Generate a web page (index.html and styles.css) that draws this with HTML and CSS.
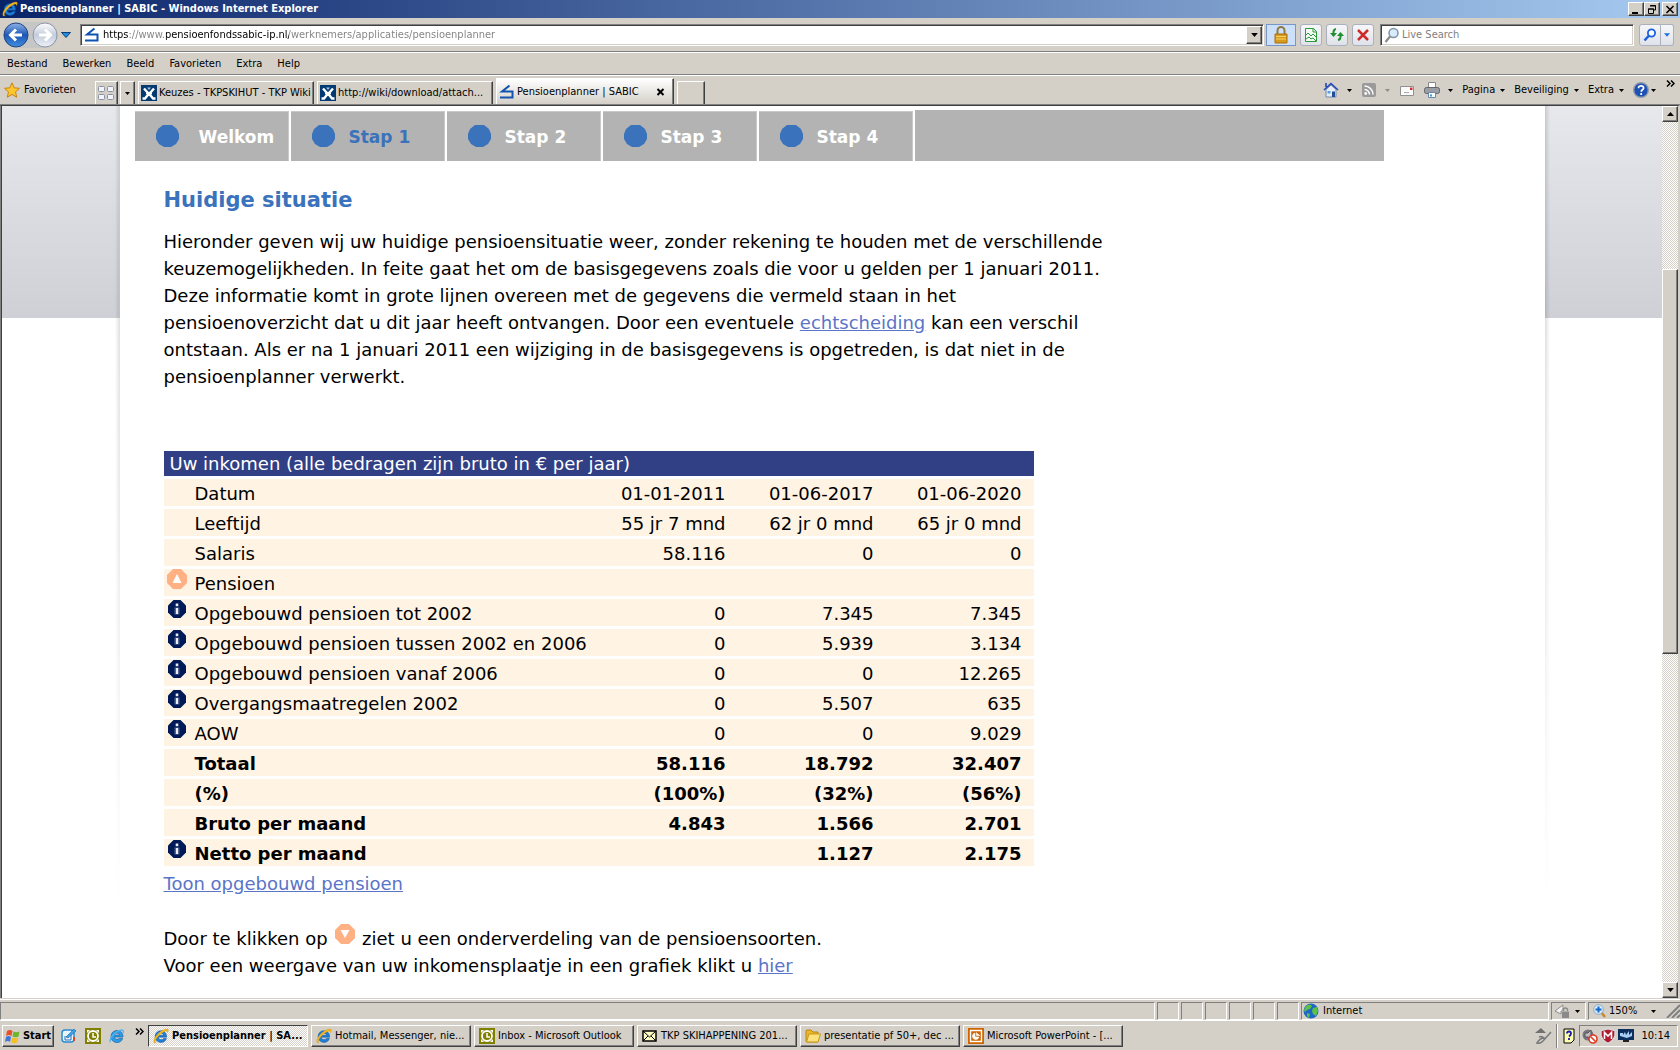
FILE: index.html
```html
<!DOCTYPE html>
<html lang="nl">
<head>
<meta charset="utf-8">
<title>Pensioenplanner | SABIC</title>
<link rel="stylesheet" href="styles.css">
</head>
<body>
<svg class="defs" aria-hidden="true">
  <defs>
    <linearGradient id="gBlue" x1="0" y1="0" x2="0" y2="1"><stop offset="0" stop-color="#8db4e8"/><stop offset=".5" stop-color="#1f56b5"/><stop offset="1" stop-color="#3f8fe0"/></linearGradient>
    <linearGradient id="gPale" x1="0" y1="0" x2="0" y2="1"><stop offset="0" stop-color="#fff"/><stop offset=".5" stop-color="#c3cbdb"/><stop offset="1" stop-color="#eef2f8"/></linearGradient>
    <symbol id="ie" viewBox="0 0 16 16">
      <path d="M13.6 9.2H5.2c.1 1.500 1.200 2.500 2.800 2.500 1.100 0 1.900-.4 2.400-1.200h3c-.8 2.500-2.800 3.900-5.500 3.900C4.500 14.400 2.100 12 2.100 8.600S4.500 2.800 7.900 2.800s5.900 2.400 5.700 6.400zM5.300 7.300h5.200C10.300 6 9.400 5.200 7.900 5.200S5.500 6 5.300 7.300z" fill="#1e7fd6" stroke="#0c4d9c" stroke-width=".5"/>
      <path d="M1.300 14.800C-.6 12.600 3 6.500 8 3.300 11.500 1 15 .2 15.300 1.900c.1.800-.2 1.800-.8 2.800.1-1.400-.6-2-2.100-1.500C8.500 4.500 3.400 9.500 2.400 12.600c-.3 1.100 0 1.700.9 1.700-.8.6-1.500.9-2 .5z" fill="#f5b81f" stroke="#c98a08" stroke-width=".3"/>
    </symbol>
    <symbol id="sabic" viewBox="0 0 16 16"><path d="M10.500 1.500 3 7.500h10.500v6H1" fill="none" stroke="#1253b0" stroke-width="2"/></symbol>
    <symbol id="wiki" viewBox="0 0 16 16"><path d="M0 0h16v16H0z" fill="#033a72"/><path d="M3 3.500 7 8M13 3.500 9 8M1.500 13.500h2.500L8 8.500l4 5h2.500" fill="none" stroke="#fff" stroke-width="2.400"/><path d="M6 2.500h4L8 5z" fill="#9fc3e6"/><path d="M5 8.500h6" stroke="#fff" stroke-width="1.500"/></symbol>
    <symbol id="caret" viewBox="0 0 5 3"><path d="M0 0h5L2.500 3z"/></symbol>
    <symbol id="clock" viewBox="0 0 16 16"><path d="M0 0h16v16H0z" fill="#808000"/><path d="M2 2h3L2 5zM14 2v3l-3-3zM2 14v-3l3 3zM14 14h-3l3-3z" fill="#fff"/><circle cx="8" cy="8" r="5" fill="none" stroke="#fff" stroke-width="1.800"/><path d="M8 5v4h3" fill="none" stroke="#fff" stroke-width="1.500"/></symbol>
    <symbol id="info" viewBox="0 0 18 18"><path d="M5.500 0h7L18 5.500v7L12.500 18h-7L0 12.500v-7z" fill="#001a57"/><path d="M6.500 7.500h5v7h-5z" fill="#53628c"/><path d="M8 8h2v6H8zM7.700 3.500h2.600v2.700H7.700z" fill="#e8edf5"/></symbol>
    <symbol id="up" viewBox="0 0 20 20"><path d="M6 0h8l6 6v8l-6 6H6l-6-6V6z" fill="#ffb184"/><path d="M10 5l4.500 9h-9z" fill="#fff"/></symbol>
    <symbol id="down" viewBox="0 0 20 20"><path d="M6 0h8l6 6v8l-6 6H6l-6-6V6z" fill="#ffb184"/><path d="M10 14l4.500-8h-9z" fill="#fff"/></symbol>
    <symbol id="dot" viewBox="0 0 23 22"><path d="M7 0h9l5 4 2 5v5l-3 5-5 3H8l-5-3-3-5V9l2-5z" fill="#3a72bb"/></symbol>
    <symbol id="more" viewBox="0 0 9 7"><path d="M1 .5l3 3-3 3M5 .5l3 3-3 3" fill="none" stroke="#000" stroke-width="1.500"/></symbol>
  </defs>
</svg>

<header class="titlebar">
  <svg class="i16"><use href="#ie"/></svg>
  <h1>Pensioenplanner | SABIC - Windows Internet Explorer</h1>
  <div class="winbtns">
    <button class="raised winbtn" aria-label="Minimaliseren"><svg width="10" height="9"><path d="M1 7h6v2H1z"/></svg></button>
    <button class="raised winbtn" aria-label="Verkleinen"><svg width="10" height="9"><path d="M3.500 1v-.5h5v4.500H7M3 1h6M1.500 4h5v4.500h-5zM1 4h6" fill="none" stroke="#000"/></svg></button>
    <button class="raised winbtn winclose" aria-label="Sluiten"><svg width="10" height="9"><path d="M1.500 1l7 7M8.500 1l-7 7" stroke="#000" stroke-width="1.600"/></svg></button>
  </div>
</header>

<nav class="address" aria-label="Navigatie">
  <div class="travel">
    <button class="plain" aria-label="Vorige"><svg width="26" height="26" viewBox="0 0 26 26"><circle cx="13" cy="13" r="12" fill="url(#gBlue)" stroke="#24457e"/><path d="M19 13H8M13 7.500 7.500 13l5.500 5.500" fill="none" stroke="#fff" stroke-width="3"/></svg></button>
    <button class="plain" aria-label="Volgende"><svg width="26" height="26" viewBox="0 0 26 26"><circle cx="13" cy="13" r="12" fill="url(#gPale)" stroke="#8f98a8"/><path d="M7 13h11M13 7.500l5.500 5.500-5.500 5.500" fill="none" stroke="#fff" stroke-width="3"/></svg></button>
  </div>
  <button class="plain recent" aria-label="Recente pagina's"><svg width="10" height="6"><path d="M.5.500h9L5 5.500z" fill="#1d8fd6" stroke="#0b3d80"/></svg></button>
  <div class="field urlfield">
    <svg class="i16"><use href="#sabic"/></svg>
    <input class="url" type="text" aria-label="Adres" value="https://www.pensioenfondssabic-ip.nl/werknemers/applicaties/pensioenplanner">
    <button class="raised drop" aria-label="Adreslijst"><svg width="7" height="4"><use href="#caret"/></svg></button>
  </div>
  <button class="lockbtn" aria-label="Beveiligingsrapport"><svg width="16" height="18" viewBox="0 0 16 18"><path d="M4.500 8V4.500a3.500 3.500 0 0 1 7 0V8" fill="none" stroke="#8d7a45" stroke-width="2"/><path d="M2 8h12v9H2z" fill="#d99a1c" stroke="#a96f0a"/><path d="M3 10.500h10M3 13h10" stroke="#f6d36a"/></svg></button>
  <button class="tool" aria-label="Compatibiliteit"><svg width="14" height="16" viewBox="0 0 14 16"><path d="M1.500 1.500h8l3 3v10h-11zM9 1.500v3.500h3.500" fill="#f4fbf4" stroke="#2d9a3a"/><path d="M2 8l2-2 3 3 2-2 3 3M2 12l3-2 2 2 2-1 3 3" fill="none" stroke="#2d9a3a"/></svg></button>
  <button class="tool" aria-label="Vernieuwen"><svg width="14" height="14" viewBox="0 0 14 14"><path d="M6 1Q3 1.500 3.500 6M8 12q3-.5 2.500-5" fill="none" stroke="#1e8f2c" stroke-width="2"/><path d="M0 5h7L3.500 9zM7 8h7l-3.500-4z" fill="#1e8f2c"/></svg></button>
  <button class="tool" aria-label="Stoppen"><svg width="14" height="14" viewBox="0 0 14 14"><path d="M2 2l10 10M12 2 2 12" stroke="#cc2b2b" stroke-width="2.500"/></svg></button>
  <div class="field searchfield">
    <svg class="i16" viewBox="0 0 16 16"><circle cx="9.500" cy="6" r="4.500" fill="#d9ecfb" stroke="#7f93a8" stroke-width="1.500"/><path d="M6 9.500 1.500 15" stroke="#8a8a8a" stroke-width="2.200"/></svg>
    <input type="text" aria-label="Zoeken" placeholder="Live Search">
  </div>
  <div class="searchbtns">
    <button class="tool" aria-label="Zoeken"><svg width="14" height="14" viewBox="0 0 14 14"><circle cx="8.500" cy="5" r="3.600" fill="#fff" stroke="#1b5fe0" stroke-width="1.800"/><path d="M6 7.500 1.500 12.500" stroke="#1b5fe0" stroke-width="2.500"/></svg></button>
    <button class="tool slim" aria-label="Zoekopties"><svg width="6" height="4" fill="#1b6fe0"><use href="#caret"/></svg></button>
  </div>
</nav>

<nav class="menu" aria-label="Menu">
  <button class="plain">Bestand</button><button class="plain">Bewerken</button><button class="plain">Beeld</button><button class="plain">Favorieten</button><button class="plain">Extra</button><button class="plain">Help</button>
</nav>

<div class="tabsrow">
  <button class="plain fav"><svg class="i16" viewBox="0 0 16 16"><path d="M8 .8l2.200 5 5.300.5-4 3.600 1.200 5.300L8 12.400l-4.700 2.800 1.200-5.300-4-3.600 5.300-.5z" fill="#fcc62f" stroke="#c98311"/></svg>Favorieten</button>
  <div class="tabs">
    <button class="tab quick" aria-label="Snelle tabbladen"><svg width="16" height="14" viewBox="0 0 16 14"><g fill="#f2f4f9" stroke="#8790a6"><rect x=".5" y=".5" width="6" height="5" rx="1"/><rect x="9.500" y=".5" width="6" height="5" rx="1"/><rect x=".5" y="8.500" width="6" height="5" rx="1"/><rect x="9.500" y="8.500" width="6" height="5" rx="1"/></g></svg></button>
    <button class="tab tablist" aria-label="Tabbladenlijst"><svg width="5" height="3"><use href="#caret"/></svg></button>
    <button class="tab"><svg class="i16"><use href="#wiki"/></svg><span>Keuzes - TKPSKIHUT - TKP Wiki</span></button>
    <button class="tab"><svg class="i16"><use href="#wiki"/></svg><span>http://wiki/download/attach...</span></button>
    <button class="tab active"><svg class="i16"><use href="#sabic"/></svg><span>Pensioenplanner | SABIC</span><svg class="close" width="9" height="8"><path d="M1.500 1l6 6M7.500 1l-6 6" stroke="#000" stroke-width="2"/></svg></button>
    <button class="tab new" aria-label="Nieuw tabblad"></button>
  </div>
  <div class="commands">
    <button class="plain cmd" aria-label="Startpagina"><svg class="i16" viewBox="0 0 16 16"><path d="M3 7.500 8 3l5 4.500V15H3z" fill="#e6edf6" stroke="#7489a8"/><path d="M1 8l7-6.500L15 8M3 1v4" fill="none" stroke="#2347b8" stroke-width="1.600"/><path d="M9 9.500h3V15H9z" fill="#1d4f9c"/><path d="M4.500 9h3v2.500h-3z" fill="#59a0d8"/></svg><svg class="car"><use href="#caret"/></svg></button>
    <button class="plain cmd" aria-label="Feeds"><svg class="i16" viewBox="0 0 16 16"><rect x="1" y="1" width="14" height="14" rx="2" fill="#9a9a9a"/><circle cx="4.700" cy="11.500" r="1.400" fill="#fff"/><path d="M3.500 7.500a5 5 0 0 1 5 5M3.500 4a8.500 8.500 0 0 1 8.500 8.500" fill="none" stroke="#fff" stroke-width="1.500"/></svg><svg class="car dim"><use href="#caret"/></svg></button>
    <button class="plain cmd" aria-label="E-mail"><svg class="i16" viewBox="0 0 16 16"><path d="M1.500 4.500h13v9h-13z" fill="#fbfbfb" stroke="#909090"/><path d="M11 5.500h2.500V8H11z" fill="#d62b2b"/><path d="M5 10.500h5" stroke="#aaa"/></svg></button>
    <button class="plain cmd" aria-label="Afdrukken"><svg class="i16" viewBox="0 0 16 16"><path d="M4.500.5h7v6h-7z" fill="#fff" stroke="#888"/><rect x=".5" y="5.500" width="15" height="6" rx="2" fill="#9a9da3" stroke="#62656b"/><path d="M4.500 10.500h7v5h-7z" fill="#fff" stroke="#6a86b0"/><path d="M6 12.500h2v2H6z" fill="#2a9fd0"/></svg><svg class="car"><use href="#caret"/></svg></button>
    <button class="plain cmd txt">Pagina<svg class="car"><use href="#caret"/></svg></button>
    <button class="plain cmd txt">Beveiliging<svg class="car"><use href="#caret"/></svg></button>
    <button class="plain cmd txt">Extra<svg class="car"><use href="#caret"/></svg></button>
    <button class="plain cmd help" aria-label="Help"><svg class="i16" viewBox="0 0 16 16"><circle cx="8" cy="8" r="7.300" fill="#1d50b4" stroke="#8e98a8" stroke-width="1.400"/><path d="M5.500 6.200C5.500 4.500 6.500 3.800 8 3.800s2.600.8 2.600 2.200c0 1.700-2.400 1.800-2.400 3.700M8.200 11v2" fill="none" stroke="#fff" stroke-width="1.700"/></svg><svg class="car"><use href="#caret"/></svg></button>
    <button class="plain over" aria-label="Meer"><svg width="9" height="7"><use href="#more"/></svg></button>
  </div>
</div>

<div class="viewport">
  <div class="canvas">
    <div class="side left"></div>
    <main class="page">
      <ol class="steps">
        <li><a class="first" href="#welkom"><svg><use href="#dot"/></svg><span>Welkom</span></a></li>
        <li><a class="current" href="#stap1"><svg><use href="#dot"/></svg><span>Stap 1</span></a></li>
        <li><a href="#stap2"><svg><use href="#dot"/></svg><span>Stap 2</span></a></li>
        <li><a href="#stap3"><svg><use href="#dot"/></svg><span>Stap 3</span></a></li>
        <li><a href="#stap4"><svg><use href="#dot"/></svg><span>Stap 4</span></a></li>
      </ol>
      <article>
        <h2>Huidige situatie</h2>
        <p>Hieronder geven wij uw huidige pensioensituatie weer, zonder rekening te houden met de verschillende<br>keuzemogelijkheden. In feite gaat het om de basisgegevens zoals die voor u gelden per 1 januari 2011.<br>Deze informatie komt in grote lijnen overeen met de gegevens die vermeld staan in het<br>pensioenoverzicht dat u dit jaar heeft ontvangen. Door een eventuele <a href="#echtscheiding">echtscheiding</a> kan een verschil<br>ontstaan. Als er na 1 januari 2011 een wijziging in de basisgegevens is opgetreden, is dat niet in de<br>pensioenplanner verwerkt.</p>
        <table>
          <colgroup><col class="cicon"><col><col class="cnum"><col class="cnum"><col class="cnum"></colgroup>
          <thead><tr><th colspan="5">Uw inkomen (alle bedragen zijn bruto in € per jaar)</th></tr></thead>
          <tbody>
            <tr><td></td><td>Datum</td><td>01-01-2011</td><td>01-06-2017</td><td>01-06-2020</td></tr>
            <tr><td></td><td>Leeftijd</td><td>55 jr 7 mnd</td><td>62 jr 0 mnd</td><td>65 jr 0 mnd</td></tr>
            <tr><td></td><td>Salaris</td><td>58.116</td><td>0</td><td>0</td></tr>
            <tr><td><button class="plain" aria-label="Inklappen"><svg width="20" height="20"><use href="#up"/></svg></button></td><td>Pensioen</td><td></td><td></td><td></td></tr>
            <tr><td><button class="plain inf" aria-label="Info"><svg width="18" height="18"><use href="#info"/></svg></button></td><td>Opgebouwd pensioen tot 2002</td><td>0</td><td>7.345</td><td>7.345</td></tr>
            <tr><td><button class="plain inf" aria-label="Info"><svg width="18" height="18"><use href="#info"/></svg></button></td><td>Opgebouwd pensioen tussen 2002 en 2006</td><td>0</td><td>5.939</td><td>3.134</td></tr>
            <tr><td><button class="plain inf" aria-label="Info"><svg width="18" height="18"><use href="#info"/></svg></button></td><td>Opgebouwd pensioen vanaf 2006</td><td>0</td><td>0</td><td>12.265</td></tr>
            <tr><td><button class="plain inf" aria-label="Info"><svg width="18" height="18"><use href="#info"/></svg></button></td><td>Overgangsmaatregelen 2002</td><td>0</td><td>5.507</td><td>635</td></tr>
            <tr><td><button class="plain inf" aria-label="Info"><svg width="18" height="18"><use href="#info"/></svg></button></td><td>AOW</td><td>0</td><td>0</td><td>9.029</td></tr>
            <tr class="sum"><td></td><td>Totaal</td><td>58.116</td><td>18.792</td><td>32.407</td></tr>
            <tr class="sum"><td></td><td>(%)</td><td>(100%)</td><td>(32%)</td><td>(56%)</td></tr>
            <tr class="sum"><td></td><td>Bruto per maand</td><td>4.843</td><td>1.566</td><td>2.701</td></tr>
            <tr class="sum"><td><button class="plain inf" aria-label="Info"><svg width="18" height="18"><use href="#info"/></svg></button></td><td>Netto per maand</td><td></td><td>1.127</td><td>2.175</td></tr>
          </tbody>
        </table>
        <p class="show"><a href="#opgebouwd">Toon opgebouwd pensioen</a></p>
        <p class="note">Door te klikken op <svg width="20" height="20"><use href="#down"/></svg> ziet u een onderverdeling van de pensioensoorten.<br>Voor een weergave van uw inkomensplaatje in een grafiek klikt u <a href="#grafiek">hier</a></p>
      </article>
    </main>
    <div class="side right"></div>
  </div>
  <div class="scroll">
    <button class="raised sbtn" aria-label="Omhoog"><svg width="7" height="4"><path d="M0 4h7L3.500 0z"/></svg></button>
    <div class="track"><span class="before"></span><div class="raised thumb"></div><span class="after"></span></div>
    <button class="raised sbtn" aria-label="Omlaag"><svg width="7" height="4"><use href="#caret"/></svg></button>
  </div>
</div>

<footer class="status">
  <div class="pane grow"></div>
  <div class="pane small"></div><div class="pane small"></div><div class="pane small"></div><div class="pane small"></div><div class="pane small"></div><div class="pane small"></div>
  <div class="pane zone"><svg class="i16" viewBox="0 0 16 16"><circle cx="8" cy="8" r="7.500" fill="#1f66c9"/><path d="M3 3q4-3 6 0L7 6l-3 1-2 2L1 7zM10 5l4-1 1 4-2 5-3-2-1-3zM4 10l3 1-1 4-2-2z" fill="#5cc244"/></svg>Internet</div>
  <div class="pane prot"><svg width="16" height="16" viewBox="0 0 16 16"><path d="M9 2 1 8l6 3V8c2 0 2-3 2-6z" fill="#f3f3f3" stroke="#8e8e8e"/><path d="M8 8.500h7V15H8z" fill="#8a8a8a"/><path d="M9.500 8V6q2-2 4 0v2" fill="none" stroke="#8a8a8a" stroke-width="1.400"/></svg><svg class="car"><use href="#caret"/></svg></div>
  <div class="pane zoom"><svg width="14" height="14" viewBox="0 0 14 14"><path d="M8 8l4 5" stroke="#c48a2c" stroke-width="2.500"/><circle cx="5.500" cy="5.500" r="4.800" fill="#d8ecfb" stroke="#88a8c8"/><path d="M5.500 2.500v6M2.500 5.500h6" stroke="#1467c4" stroke-width="2"/></svg><span>150%</span><svg class="car"><use href="#caret"/></svg><svg class="grip" width="14" height="14"><path d="M1 14 14 1M6 14l8-8M11 14l3-3" stroke="#808080" stroke-width="2"/></svg></div>
</footer>

<div class="taskbar">
  <button class="raised start"><svg width="16" height="16" viewBox="0 0 16 16"><path d="M2 3q3-2 5.500 0L6.500 8Q4 6 1 8z" fill="#e8502a"/><path d="M8.500 3.500q3 1.500 6 0l-1 5q-3 1.500-6 0z" fill="#6fb52c"/><path d="M1 9q2.500-2 5 0l-1 5Q3 12 0 14z" fill="#3f78d8"/><path d="M7.200 9.500q3 1.500 6 0l-1 5q-3 1.500-6 0z" fill="#f6bf26"/></svg>Start</button>
  <div class="launch">
    <button class="plain" aria-label="Bureaublad"><svg class="i16" viewBox="0 0 16 16"><rect x="1" y="2" width="12" height="12" rx="3" fill="#e9f5fd" stroke="#2a8ad0" stroke-width="1.500"/><path d="M4 8v4h6V5" fill="none" stroke="#2a6fb8"/><path d="M5 9l8-8 2 2-8 7z" fill="#3da2e8" stroke="#1d5fa0" stroke-width=".6"/><path d="M13 9v4" stroke="#d8482a" stroke-width="2"/></svg></button>
    <button class="plain" aria-label="Outlook"><svg class="i16"><use href="#clock"/></svg></button>
    <button class="plain" aria-label="Internet Explorer"><svg class="i16" viewBox="0 0 16 16"><path d="M14 9H5.500c.2 1.500 1 2.300 2.500 2.300 1 0 1.700-.3 2.200-1h3.500C13 13 11 14.500 8 14.500c-3.600 0-6-2.500-6-6s2.500-6 6-6 6.300 2.500 6 6.500zM5.500 7h5C10.300 5.800 9.500 5.200 8 5.200S5.700 5.800 5.500 7z" fill="#2a9be8" stroke="#105a9e" stroke-width=".6"/><path d="M1.500 14C-.5 12 5 4 11 2.300c3-.8 4 .5 3 2.500" fill="none" stroke="#4fb2ee" stroke-width="1.400"/></svg></button>
    <button class="plain lmore" aria-label="Meer"><svg width="9" height="7"><use href="#more"/></svg></button>
  </div>
  <div class="tasks">
    <button class="task pressed"><svg class="i16"><use href="#ie"/></svg>Pensioenplanner | SA...</button>
    <button class="raised task"><svg class="i16"><use href="#ie"/></svg>Hotmail, Messenger, nie...</button>
    <button class="raised task"><svg class="i16"><use href="#clock"/></svg>Inbox - Microsoft Outlook</button>
    <button class="raised task"><svg class="i16" viewBox="0 0 16 16"><path d="M1 3h13v10H1z" fill="#ffffc8" stroke="#000" stroke-width="1.500"/><path d="M1 3l6.500 6L14 3M1 13l5-5M14 13 9 8" fill="none" stroke="#000"/></svg>TKP SKIHAPPENING 201...</button>
    <button class="raised task"><svg class="i16" viewBox="0 0 16 16"><path d="M1 3q0-1 1-1h4l2 2h5v10H2q-1 0-1-1z" fill="#e9b62c" stroke="#b9860f"/><path d="M1.500 14 4 6h11.500L13 14z" fill="#fbe27a" stroke="#c8971a"/></svg>presentatie pf 50+, dec ...</button>
    <button class="raised task"><svg class="i16" viewBox="0 0 16 16"><path d="M0 0h16v16H0z" fill="#cf6500"/><path d="M2.500 2.500h11v11h-11z" fill="none" stroke="#fff" stroke-width="1.400"/><path d="M7 5a3.300 3.300 0 1 0 4 4H7zM8.500 4.500V7.500H12" fill="#fff" stroke="#fff" stroke-width=".6"/></svg>Microsoft PowerPoint - [...</button>
  </div>
  <svg class="pen" width="17" height="16" viewBox="0 0 17 16"><path d="M0 5 6 0l5 5z" fill="#707070"/><path d="M16 4 8 13q-3 3-6 2 3-5 7-5-2-2-5-1" fill="none" stroke="#7a7a7a" stroke-width="1.600"/></svg>
  <div class="tray0"><svg width="12" height="16" viewBox="0 0 12 16"><path d="M1 1h10v11l-3 3H1z" fill="#ffffb0" stroke="#000"/><path d="M4 5.500q0-2 2-2t2 2q0 1.500-2 3M6 10v2" fill="none" stroke="#1a1ab0" stroke-width="1.800"/></svg></div>
  <div class="tray">
    <svg class="i16" viewBox="0 0 16 16"><circle cx="6" cy="7" r="5.500" fill="#77777d"/><path d="M3 5h3l3-3v9L6 9H3z" fill="#bfc0c6" stroke="#55565c"/><circle cx="11" cy="11" r="4" fill="#fff" stroke="#e03a22" stroke-width="1.600"/><path d="M8.500 8.500l5 5" stroke="#e03a22" stroke-width="1.600"/></svg>
    <svg class="i16" viewBox="0 0 16 16"><path d="M8 .8 15 2.500v5Q14 12.500 8 15.500 2 12.500 1 7.500v-5z" fill="#b01a2e" stroke="#d8d8dc" stroke-width="1.400"/><path d="M4.500 11V4.500L8 8l3.500-3.500V11" fill="none" stroke="#fff" stroke-width="1.600"/></svg>
    <svg class="i16" viewBox="0 0 16 16"><path d="M0 1h16v11H0z" fill="#0d2f5e"/><path d="M2 8V5h3v2l2-3 1 3 3-4v4l3-3v4l-5 2z" fill="#a8d0f5"/><path d="M5 12h6v2H5z" fill="#222"/></svg>
    <time>10:14</time>
  </div>
</div>
</body>
</html>
```
FILE: styles.css
```css
:root {
  --face: #d4d0c8;
  --dark: #404040;
  --mid: #808080;
  --ui: "DejaVu Sans Condensed", "DejaVu Sans", sans-serif;
}

* { box-sizing: border-box; }

body {
  margin: 0;
  height: 100vh;
  display: flex;
  flex-direction: column;
  overflow: hidden;
  background: var(--face);
  font-family: var(--ui);
  font-size: 11px;
  line-height: 14px;
  color: #000;
}

svg { display: block; flex: none; }
.defs { width: 0; height: 0; position: absolute; }
.i16 { width: 16px; height: 16px; }
.car { width: 5px; height: 3px; }
.dim { fill: #8c8c8c; }

button {
  font: inherit;
  color: inherit;
  padding: 0;
  margin: 0;
  border: 0;
  background: none;
  display: flex;
  align-items: center;
  white-space: nowrap;
}

.raised {
  background: var(--face);
  border: 1px solid;
  border-color: #fff var(--dark) var(--dark) #fff;
  box-shadow: inset -1px -1px var(--mid);
  justify-content: center;
}

/* Title bar */
.titlebar {
  flex: none;
  height: 18px;
  display: flex;
  align-items: center;
  gap: 2px;
  padding: 0 2px;
  color: #fff;
  background: linear-gradient(90deg, #0a246a, #a6caf0);
}
.titlebar h1 { margin: 0; font-size: 11px; font-weight: bold; flex: 1; }
.winbtns { display: flex; }
.winbtn { width: 16px; height: 14px; }
.winclose { margin-left: 2px; }

/* Address row */
.address {
  flex: none;
  height: 34px;
  display: flex;
  align-items: center;
  gap: 4px;
  padding: 1px 6px 0 3px;
  border-bottom: 1px solid var(--mid);
}
.travel {
  display: flex;
  gap: 3px;
  background: #c6c6c6;
  border-radius: 14px;
}
.recent { width: 16px; justify-content: center; margin: 0 2px 0 -4px; }
.field {
  height: 22px;
  display: flex;
  align-items: center;
  background: #fff;
  border: 1px solid;
  border-color: var(--mid) #fff #fff var(--mid);
  box-shadow: inset 1px 1px var(--dark), inset -1px -1px var(--face);
  padding: 2px 1px 2px 3px;
}
.field input {
  flex: 1;
  min-width: 0;
  border: 0;
  outline: 0;
  padding: 0;
  background: none;
  font: inherit;
}
.urlfield { flex: 1; gap: 3px; }
.field .url {
  color: transparent;
  background: linear-gradient(90deg, #000 26px, #808080 26px 63px, #000 63px 186px, #808080 186px);
  -webkit-background-clip: text;
  background-clip: text;
}
.drop { width: 16px; height: 18px; }
.searchfield { width: 254px; margin: 0 1px 0 2px; gap: 2px; }
.searchfield input::placeholder { color: #808080; opacity: 1; }
.lockbtn {
  width: 30px;
  height: 22px;
  justify-content: center;
  background: #cde0fa;
  border: 1px solid #7596c6;
  margin-left: -2px;
}
.tool {
  width: 22px;
  height: 22px;
  justify-content: center;
  background: linear-gradient(#f6f7f9, #dfe2ea);
  border: 1px solid #aab0bd;
  border-radius: 3px;
}
.searchbtns { display: flex; }
.searchbtns .tool:first-child { border-radius: 3px 0 0 3px; }
.slim { width: 13px; border-left: 0; border-radius: 0 3px 3px 0; }

/* Menu bar */
.menu {
  flex: none;
  height: 23px;
  display: flex;
  align-items: center;
  gap: 15px;
  padding: 1px 7px 0;
  border-top: 1px solid #fff;
  border-bottom: 1px solid var(--mid);
}

/* Tabs and commands */
.tabsrow {
  flex: none;
  height: 30px;
  display: flex;
  align-items: stretch;
  padding-left: 4px;
  border-top: 1px solid #fff;
  border-bottom: 1px solid var(--mid);
}
.fav { gap: 4px; width: 91px; }
.tabs { display: flex; align-items: flex-end; gap: 3px; flex: 1; min-width: 0; }
.tab {
  height: 23px;
  width: 176px;
  gap: 2px;
  padding-left: 2px;
  border-top: 1px solid #fff;
  border-left: 1px solid #fff;
  border-right: 1px solid var(--dark);
  box-shadow: inset -1px 0 var(--mid);
}
.quick { width: 23px; }
.tablist { width: 15px; padding-left: 4px; margin-left: -1px; }
.active { height: 26px; width: 178px; background: linear-gradient(#fff, var(--face)); }
.close { margin: 0 8px 0 auto; }
.new { width: 28px; }
.commands { display: flex; align-items: center; padding-right: 5px; }
.cmd { gap: 8px; margin-right: 9px; }
.cmd.txt { gap: 5px; margin-right: 9px; }
.cmd.help { gap: 2px; margin-right: 10px; }
.over { align-self: flex-start; margin-top: 4px; }

/* Document window */
.viewport {
  flex: 1;
  min-height: 0;
  display: flex;
  border: solid;
  border-width: 1px 2px 0 1px;
  border-color: var(--dark) var(--face) var(--face) var(--mid);
}
.canvas {
  flex: 1;
  min-width: 0;
  display: grid;
  grid-template-columns: 1fr minmax(0, 1425px) 1fr;
  overflow: hidden;
  background: #fff;
  border-left: 1px solid var(--dark);
}
.side {
  position: relative;
  background: linear-gradient(#e7e8ec, #cfd0d6) top / 100% 212px no-repeat;
}
.side::after {
  content: "";
  position: absolute;
  top: 0;
  width: 5px;
  height: 800px;
  background: linear-gradient(90deg, rgba(0, 0, 0, 0), rgba(0, 0, 0, .13));
  -webkit-mask-image: linear-gradient(#000 25%, transparent);
  mask-image: linear-gradient(#000 25%, transparent);
}
.left::after { right: 0; }
.right::after { left: 0; transform: scaleX(-1); }

.page { font-family: Verdana, "DejaVu Sans", sans-serif; font-size: 18px; line-height: 27px; }
.steps {
  display: flex;
  list-style: none;
  margin: 4px 161px 0 15px;
  padding: 0;
  height: 51px;
  background: #b3b3b3;
}
.steps li { background: #fff; padding: 1px 2px 0 0; }
.steps a {
  display: flex;
  align-items: center;
  gap: 14px;
  width: 154px;
  height: 50px;
  padding: 0 0 2px 21px;
  border: solid #c8c8c8;
  border-width: 1px 1px 0 0;
  background: #b3b3b3;
  color: #fff;
  font-size: 17px;
  font-weight: bold;
  white-space: nowrap;
  text-decoration: none;
}
.steps a svg { width: 23px; height: 22px; }
.steps a span { padding-top: 4px; }
.steps .first { gap: 20px; }
.steps .current { color: #3a72bb; }

article { padding: 25px 44px; }
h2 { margin: 0 0 14px; font-size: 21px; line-height: 28px; color: #3a72bb; }
p { margin: 0; white-space: nowrap; }
article a { color: #5a74c8; }

table {
  width: 870px;
  max-width: 100%;
  margin: 58px 0 0;
  border-spacing: 0 3px;
  table-layout: fixed;
}
.cicon { width: 31px; }
.cnum { width: 148px; }
th {
  height: 25px;
  padding: 0 6px;
  background: #313f85;
  color: #fff;
  font-weight: normal;
  text-align: left;
  line-height: 25px;
}
td {
  height: 27px;
  padding: 2px 12px 0 0;
  line-height: 25px;
  background: #fff3e4;
  text-align: right;
  white-space: nowrap;
}
td:nth-child(2) { text-align: left; padding-right: 0; }
td:first-child { padding: 0 0 0 3px; vertical-align: top; }
.inf { padding: 1px; }
.sum { font-weight: bold; }
.show { margin-top: 1px; }
.note { margin-top: 27px; }
.note svg { display: inline-block; vertical-align: 1px; margin: 0 1px 0 2px; }

/* Scroll bar */
.scroll { width: 16px; display: flex; flex-direction: column; }
.sbtn { width: 16px; height: 16px; }
.track {
  flex: 1;
  display: flex;
  flex-direction: column;
  background: repeating-conic-gradient(#fff 0 25%, #d4d0c8 0 50%) 0 0 / 2px 2px;
}
.before { flex: 147; }
.thumb { flex: 384; }
.after { flex: 329; }

/* Status bar */
.status {
  flex: none;
  height: 22px;
  display: flex;
  gap: 2px;
  padding: 4px 0 0;
  box-shadow: inset 0 1px var(--face), inset 0 2px #fff;
}
.pane {
  display: flex;
  align-items: center;
  border: 1px solid;
  border-color: var(--mid) #fff #fff var(--mid);
}
.grow { flex: 1; }
.small { width: 22px; }
.zone { width: 248px; padding-left: 1px; gap: 4px; }
.prot { width: 35px; padding-left: 2px; gap: 5px; }
.zoom { width: 92px; padding-left: 4px; gap: 2px; border-right: 0; }
.zoom span { width: 40px; }
.grip { margin-left: auto; }

/* Task bar */
.taskbar {
  flex: none;
  height: 30px;
  display: flex;
  align-items: center;
  padding: 0 2px;
  border-top: 1px solid #fff;
}
.start { width: 52px; height: 22px; gap: 2px; font-weight: bold; }
.launch { display: flex; gap: 8px; padding: 0 4px 0 7px; }
.lmore { padding-left: 2px; padding-bottom: 8px; }
.tasks { display: flex; gap: 3px; flex: 1; min-width: 0; }
.task { flex: 0 1 160px; height: 22px; gap: 3px; padding-left: 4px; justify-content: flex-start; }
.pressed {
  font-weight: bold;
  border: 1px solid;
  border-color: var(--dark) #fff #fff var(--dark);
  background: repeating-conic-gradient(#fff 0 25%, #d4d0c8 0 50%) 0 0 / 2px 2px;
}
.pen { margin-right: 4px; }
.tray0 { height: 24px; display: flex; align-items: center; padding: 0 4px 0 6px; border-left: 1px solid var(--mid); box-shadow: inset 1px 0 #fff; }
.tray {
  height: 22px;
  display: flex;
  align-items: center;
  gap: 2px;
  padding: 0 7px 0 2px;
  border: 1px solid;
  border-color: var(--mid) #fff #fff var(--mid);
}
.tray time { padding-left: 5px; }
```
